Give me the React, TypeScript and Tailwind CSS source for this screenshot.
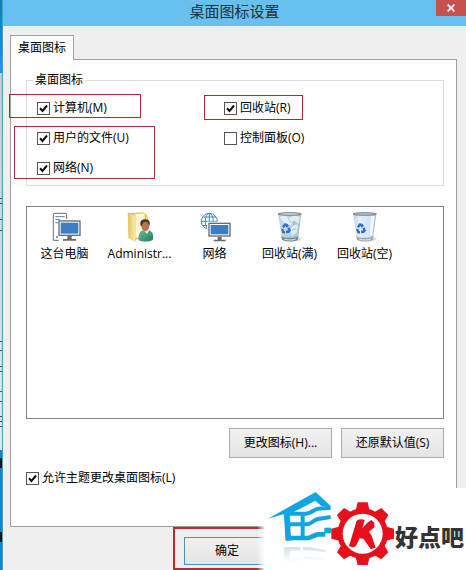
import { useState } from "react";
import type { ReactNode } from "react";

const backdropMarks = [198, 203, 219, 230, 341, 350, 366, 371, 391, 401, 416, 421, 426];

function ComputerIcon() {
  return (
    <svg viewBox="0 0 96 96" className="size-8" aria-hidden="true">
      <path d="M13 7H53V24M13 7V88H29" fill="none" stroke="#6d6f73" strokeWidth="3" />
      <path d="M19 17H47M19 26H34M19 35H28" stroke="#5f7f9f" strokeWidth="3" />
      <path d="M21 78h6" stroke="#6d6f73" strokeWidth="5" />
      <rect x="28" y="28" width="67" height="47" fill="#6b6b6b" />
      <rect x="32" y="32" width="59" height="39" fill="#fff" />
      <rect x="35" y="35" width="53" height="33" fill="#3b7fc2" />
      <path d="M55 75h13v9h13v5H42v-5h13z" fill="#6b6b6b" />
    </svg>
  );
}

function UserFolderIcon() {
  return (
    <svg viewBox="0 0 96 96" className="size-8" aria-hidden="true">
      <defs>
        <linearGradient id="folder" x1="0" x2="1">
          <stop offset="0" stopColor="#e5c256" />
          <stop offset="1" stopColor="#fbeeb0" />
        </linearGradient>
        <linearGradient id="shirt" x1="0" x2="1" y1="0" y2="1">
          <stop offset="0" stopColor="#66bd97" />
          <stop offset="1" stopColor="#21805d" />
        </linearGradient>
      </defs>
      <path d="M16 7 58 4 66 8V82L30 86Z" fill="#dfbd57" />
      <path d="M32 9 62 7V76L32 82Z" fill="#fff7d2" />
      <path d="M12 5 34 13V92L14 80Z" fill="url(#folder)" stroke="#d4ad45" strokeWidth="1" />
      <path d="M66 10l6 5v30l-6 3z" fill="#ecd680" />
      <path d="M44 88c-2-17 3-29 17-31l15 1c11 5 14 18 10 29-12 6-31 6-42 1z" fill="url(#shirt)" />
      <path d="M58 57 69 69 76 57Z" fill="#e8f2ee" />
      <ellipse cx="64" cy="44" rx="12" ry="17" fill="#b9764f" />
      <path d="M50 44c-4-14 5-20 15-19 11 0 15 9 11 20-2-9-5-13-11-13-7 1-10 4-11 13z" fill="#4a352b" />
    </svg>
  );
}

function NetworkIcon() {
  return (
    <svg viewBox="0 0 96 96" className="size-8" aria-hidden="true">
      <g fill="none" stroke="#4a84be" strokeWidth="3">
        <circle cx="31" cy="31" r="24" />
        <ellipse cx="31" cy="31" rx="12" ry="24" />
        <path d="M31 7V55M7 31H55M11 18H51M11 44H51" />
      </g>
      <rect x="25" y="32" width="71" height="47" fill="#fff" />
      <rect x="28" y="35" width="67" height="42" fill="#6b6b6b" />
      <rect x="32" y="39" width="59" height="34" fill="#fff" />
      <rect x="35" y="42" width="53" height="28" fill="#3b7fc2" />
      <path d="M56 77h12v9h12v5H44v-5h12z" fill="#6b6b6b" />
    </svg>
  );
}

function BinIcon({ full }: { full?: boolean }) {
  return (
    <svg viewBox="0 0 96 96" className="size-8" aria-hidden="true">
      <defs>
        <linearGradient id={full ? "bin-full" : "bin-empty"} x1="0" x2="1">
          <stop offset="0" stopColor="#c3d0dc" />
          <stop offset="0.3" stopColor={full ? "#c3dced" : "#e4effa"} />
          <stop offset="0.75" stopColor={full ? "#a9c9df" : "#cfe3f5"} />
          <stop offset="1" stopColor="#a7b7c5" />
        </linearGradient>
      </defs>
      <path d="M66 86 84 78 78 88 62 92Z" fill="#d9d9d9" />
      <path d="M12 7H82L72 85C64 92 32 92 24 85Z" fill={full ? "url(#bin-full)" : "url(#bin-empty)"} />
      <path d="M22 76c12 6 38 6 52 0l-2 10c-9 7-40 7-48 0z" fill={full ? "#7d878e" : "#a3a5a8"} />
      <path d="M31 84c10 4 25 4 34 0" fill="none" stroke="#e5e9eb" strokeWidth="3" />
      {full ? (
        <g>
          <path d="M18 18 34 12 44 25 58 13 78 17 74 39 62 30 49 43 27 34Z" fill="#e3edf4" />
          <path d="M56 44 72 40 69 64 55 75 48 59Z" fill="#dbeaf4" />
          <path d="M44 25 52 35 62 30 58 44M54 58 66 53M29 72 43 75" fill="none" stroke="#8fb2c9" strokeWidth="2" />
        </g>
      ) : (
        <path d="M66 15 77 15 69 73 62 73Z" fill="#f4f9ff" />
      )}
      <ellipse cx="47" cy="9" rx="35" ry="4" fill={full ? "#c8d4dc" : "#b8bfc5"} stroke="#7b8388" strokeWidth="3" />
      <g fill="#2b6fd0">
        <path d="M24 47 31 37 40 38 45 45 38 50 34 45 30 51Z" />
        <path d="M47 49 51 59 45 66 36 67 36 59 43 58 40 52Z" />
        <path d="M21 53 29 54 29 59 33 61V68L25 66Z" />
      </g>
    </svg>
  );
}

const icons = [
  { name: "这台电脑", icon: <ComputerIcon /> },
  { name: "Administr...", icon: <UserFolderIcon /> },
  { name: "网络", icon: <NetworkIcon /> },
  { name: "回收站(满)", icon: <BinIcon full /> },
  { name: "回收站(空)", icon: <BinIcon /> },
];

function CheckField({ label, initial = true }: { label: string; initial?: boolean }) {
  const [checked, setChecked] = useState(initial);
  return (
    <label className="flex w-fit items-center gap-[3px]">
      <span className="relative flex">
        <input
          type="checkbox"
          checked={checked}
          onChange={(e) => setChecked(e.target.checked)}
          className="size-[13px] appearance-none border border-[#555] bg-white"
        />
        {checked && (
          <svg viewBox="0 0 13 13" className="pointer-events-none absolute inset-0 size-[13px]" aria-hidden="true">
            <path d="M3 6.3 5.5 9 10 3.5" fill="none" stroke="#111" strokeWidth="2" />
          </svg>
        )}
      </span>
      <span className="whitespace-nowrap">{label}</span>
    </label>
  );
}

function PushButton({ children }: { children: ReactNode }) {
  return (
    <button
      type="button"
      className="h-[30px] w-[103px] border border-[#acacac] bg-linear-to-b from-[#f1f1f1] to-[#e4e4e4] text-center hover:border-[#3c9bd6]"
    >
      {children}
    </button>
  );
}

function Watermark() {
  return (
    <div className="absolute right-0 bottom-0 flex h-[82px] w-[201px] items-center bg-white">
      <div className="absolute top-0 -left-2 h-full w-2 bg-linear-to-r from-transparent to-white" />
      <svg viewBox="9 0 390 246" className="h-[82px] w-[130px] shrink-0" aria-hidden="true">
        <defs>
          <linearGradient id="mirror" x1="0" x2="0" y1="0" y2="1">
            <stop offset="0" stopColor="#d3e3e9" />
            <stop offset="1" stopColor="#fff" />
          </linearGradient>
        </defs>
        <path
          d="M65 177H116V188H84V212H116V222H67ZM122 177 150 178 190 187V193L150 188 122 187ZM126 205 192 212V218L126 214Z"
          fill="url(#mirror)"
        />
        <path d="M18 92 161 12 206 54H178L160 38 84 78 64 79Z" fill="#10a5e2" />
        <g fill="none" stroke="#10a5e2">
          <path d="M74 74 79 158" strokeWidth="17" />
          <path d="M122 72V152" strokeWidth="12" />
          <path d="M68 77H132C148 77 152 66 168 62L206 59" strokeWidth="12" />
          <path d="M78 109H132C148 109 152 97 168 93L206 87" strokeWidth="12" />
          <path d="M72 150H136C150 150 156 139 170 139H190" strokeWidth="14" />
        </g>
        <path d="M187 119H208V136H187Z" fill="#10a5e2" />
        <g fill="#e60f1b" transform="translate(302 137)">
          <circle r="76" />
          {[0, 45, 90, 135, 180, 225, 270, 315].map((angle) => (
            <path key={angle} d="M-22 -66-15 -94H15L22 -66Z" transform={`rotate(${angle})`} />
          ))}
        </g>
        <circle cx="302" cy="137" r="60" fill="#fff" />
        <path
          d="M284 98Q296 91 308 96L301 121 316 104 328 96 337 104V118L321 131 329 143 341 180 326 183 304 152 293 151 282 174Q272 181 261 174Z"
          fill="#e60f1b"
        />
      </svg>
      <span className="pt-4 text-[23px] leading-none font-black whitespace-nowrap text-[#333]">好点吧</span>
    </div>
  );
}

export default function App() {
  return (
    <div className="flex min-h-screen bg-[#efefef] font-['Open_Sans','Noto_Sans_CJK_SC',sans-serif] text-xs leading-4 text-black">
      {/* Sliver of the desktop behind the window */}
      <div className="relative flex w-[3px] shrink-0 flex-col border-r border-[#4e9fb4] bg-[#0a87d2]">
        <div className="h-[73px] bg-linear-to-b from-[#087bc4] to-[#169be8]" />
        <div className="h-[377px] bg-linear-to-b from-[#c4cbd0] to-[#dce8f2]" />
        {backdropMarks.map((top) => (
          <div key={top} className="absolute left-0 h-px w-[2px] bg-[#34518c]" style={{ top }} />
        ))}
        <div className="mt-2 h-2.5 bg-[#07131f]" />
        <div className="mt-16 h-2.5 bg-[#07131f]" />
      </div>

      <main className="relative flex min-w-0 flex-1 flex-col">
        <header className="relative flex h-[26px] items-center justify-center bg-[#68c0ee]">
          <h1 className="pb-1 text-[15px] leading-5 text-[#18313f]">桌面图标设置</h1>
          <button
            type="button"
            aria-label="关闭"
            className="absolute top-0 right-0 flex h-4 w-[30px] items-center justify-center bg-[#c75050] hover:bg-[#e04343]"
          >
            <svg viewBox="0 0 8 8" className="size-2" aria-hidden="true">
              <path d="M.7.7l6.6 6.6M7.3.7.7 7.3" stroke="#fff" strokeWidth="1.7" />
            </svg>
          </button>
        </header>

        <div className="pt-[9px] pr-[9px] pl-[7px]">
          <div role="tablist" className="flex">
            <button
              type="button"
              role="tab"
              aria-selected="true"
              className="z-10 -mb-px h-[25px] border border-b-0 border-[#a0a0a0] bg-white px-[7px]"
            >
              桌面图标
            </button>
          </div>

          <div role="tabpanel" className="border border-[#a0a0a0] bg-white pt-3 pr-3 pb-10 pl-[15px]">
            <fieldset className="border border-[#dcdcdc] pt-[5px] pr-2 pb-[2px] pl-[6px]">
              <legend className="px-[2px]">桌面图标</legend>
              <div className="flex pl-1">
                <div className="w-[187px]">
                  <div className="relative flex h-[30px] items-center">
                    <CheckField label="计算机(M)" />
                    <div className="pointer-events-none absolute top-px -left-7 h-6 w-[132px] border border-[#b5282d]" />
                  </div>
                  <div className="relative">
                    <div className="flex h-[30px] items-center">
                      <CheckField label="用户的文件(U)" />
                    </div>
                    <div className="flex h-[30px] items-center">
                      <CheckField label="网络(N)" />
                    </div>
                    <div className="pointer-events-none absolute top-[3px] -left-[23px] h-[53px] w-[141px] border border-[#b5282d]" />
                  </div>
                </div>
                <div className="flex-1">
                  <div className="relative flex h-[30px] items-center">
                    <CheckField label="回收站(R)" />
                    <div className="pointer-events-none absolute top-[2px] -left-5 h-[25px] w-[99px] border border-[#b5282d]" />
                  </div>
                  <div className="flex h-[30px] items-center">
                    <CheckField label="控制面板(O)" initial={false} />
                  </div>
                </div>
              </div>
            </fieldset>

            <ul className="mt-5 flex min-h-[213px] flex-wrap content-start border border-[#828282] pt-1">
              {icons.map((item) => (
                <li key={item.name} className="flex w-[75px] flex-col items-center gap-[3px]">
                  {item.icon}
                  <span className="whitespace-nowrap">{item.name}</span>
                </li>
              ))}
            </ul>

            <div className="mt-[9px] flex justify-end gap-[9px]">
              <PushButton>更改图标(H)...</PushButton>
              <PushButton>还原默认值(S)</PushButton>
            </div>

            <div className="mt-3">
              <CheckField label="允许主题更改桌面图标(L)" />
            </div>
          </div>
        </div>

        <div className="flex pl-[170px]">
          <div className="relative px-[11px] pt-[10px] pb-[5px]">
            <button
              type="button"
              className="block h-7 w-[86px] border border-[#3c95cf] bg-linear-to-b from-[#f1f1f1] to-[#e4e4e4]"
            >
              确定
            </button>
            <div className="pointer-events-none absolute inset-0 border-2 border-[#c0282d]" />
          </div>
        </div>

        <Watermark />
      </main>
    </div>
  );
}
